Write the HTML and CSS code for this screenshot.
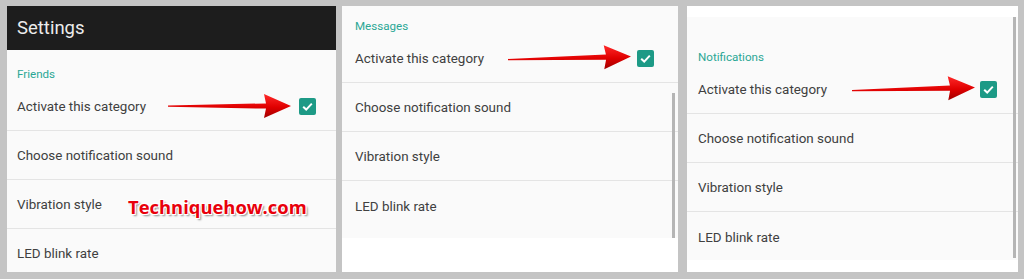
FILE: index.html
```html
<!DOCTYPE html>
<html>
<head>
<meta charset="utf-8">
<link rel="stylesheet" href="styles.css">
</head>
<body>
<div class="shots">
  <section class="panel panel-a">
    <header class="appbar">Settings</header>
    <div class="list list-a">
      <div class="cat cat-a">Friends</div>
      <div class="row"><span>Activate this category</span><span class="check"><svg viewBox="0 0 17 17" width="17" height="17"><path d="M4.2 8.8 L7.2 11.6 L12.8 5.6" fill="none" stroke="#fff" stroke-width="2"/></svg></span></div>
      <div class="row"><span>Choose notification sound</span></div>
      <div class="row"><span>Vibration style</span></div>
      <div class="row"><span>LED blink rate</span></div>
    </div>
    <svg class="arrow arrow-a" viewBox="0 0 124 26" width="124" height="26"><defs><linearGradient id="ga" x1="0" y1="0" x2="0" y2="1"><stop offset="0" stop-color="#ff2a2a"/><stop offset="0.55" stop-color="#e00000"/><stop offset="1" stop-color="#a00000"/></linearGradient></defs><path d="M0 12.4 L98 10.4 L96 1 L123 13 L96 25 L98 15.6 L0 13.8 Z" fill="url(#ga)"/></svg>
    <div class="mark">Techniquehow.com</div>
  </section>

  <section class="panel panel-b">
    <div class="list list-b">
      <div class="cat cat-b">Messages</div>
      <div class="row row-b"><span>Activate this category</span><span class="check"><svg viewBox="0 0 17 17" width="17" height="17"><path d="M4.2 8.8 L7.2 11.6 L12.8 5.6" fill="none" stroke="#fff" stroke-width="2"/></svg></span></div>
      <div class="row"><span>Choose notification sound</span></div>
      <div class="row"><span>Vibration style</span></div>
      <div class="row last"><span>LED blink rate</span></div>
      <div class="scroll scroll-b"></div>
    </div>
    <svg class="arrow arrow-b" viewBox="0 0 124 26" width="124" height="26"><path d="M0 12.4 L98 10.4 L96 1 L123 13 L96 25 L98 15.6 L0 13.8 Z" fill="url(#ga)"/></svg>
  </section>

  <section class="panel panel-c">
    <div class="strip"></div>
    <div class="list list-c">
      <div class="cat cat-c">Notifications</div>
      <div class="row"><span>Activate this category</span><span class="check"><svg viewBox="0 0 17 17" width="17" height="17"><path d="M4.2 8.8 L7.2 11.6 L12.8 5.6" fill="none" stroke="#fff" stroke-width="2"/></svg></span></div>
      <div class="row"><span>Choose notification sound</span></div>
      <div class="row"><span>Vibration style</span></div>
      <div class="row last"><span>LED blink rate</span></div>
      <div class="scroll scroll-c"></div>
    </div>
    <svg class="arrow arrow-c" viewBox="0 0 124 26" width="124" height="26"><path d="M0 12.4 L98 10.4 L96 1 L123 13 L96 25 L98 15.6 L0 13.8 Z" fill="url(#ga)"/></svg>
  </section>
</div>
</body>
</html>
```

FILE: styles.css
```css
html, body {
  margin: 0;
  padding: 0;
}
body {
  width: 1024px;
  height: 279px;
  overflow: hidden;
  background: #c4c4c4;
  font-family: Roboto, "Liberation Sans", sans-serif;
}
.shots {
  display: flex;
  gap: 6px;
  padding: 6px 0 0 7px;
}
.panel {
  position: relative;
  height: 266px;
  background: #ffffff;
  display: flex;
  flex-direction: column;
  overflow: hidden;
}
.panel-a { width: 329px; background: #fafafa; }
.panel-b { width: 336px; }
.panel-c { width: 331px; margin-left: 3px; }

.appbar {
  height: 44px;
  flex: 0 0 44px;
  background: #1d1d1d;
  color: #ececec;
  font-size: 18.5px;
  line-height: 44px;
  padding-left: 10px;
}
.list {
  position: relative;
  background: #fafafa;
  display: flex;
  flex-direction: column;
}
.list-b { height: 232px; }
.strip { height: 11px; flex: 0 0 11px; background: #fff; }
.list-c { height: 243px; }

.cat {
  color: #2aa795;
  font-size: 11.6px;
  line-height: 16px;
  padding-left: 10px;
}
.cat-a { padding-top: 16px; height: 16px; }
.cat-b { padding-top: 12px; height: 16px; padding-left: 13px; }
.cat-c { padding-top: 32px; height: 16px; padding-left: 11px; }

.row {
  height: 48px;
  flex: 0 0 48px;
  border-bottom: 1px solid #e4e4e4;
  display: flex;
  align-items: center;
  justify-content: space-between;
  padding: 1px 20px 0 10px;
  box-sizing: border-box;
  height: 49px;
  flex-basis: 49px;
  color: #404040;
  font-size: 13.4px;
}
.list-b .row { padding-left: 13px; padding-right: 24px; }
.list-c .row { padding-left: 11px; padding-right: 21px; }
.row.last { border-bottom: none; }

.check {
  width: 17px;
  height: 17px;
  border-radius: 2px;
  background: #1d9a86;
  display: block;
  margin-top: -1px;
}
.check svg { display: block; }

.scroll {
  position: absolute;
  width: 3px;
  background: #b5b5b5;
}
.scroll-b { right: 3px; top: 87px; bottom: 0; }
.scroll-c { right: 2px; top: 0; bottom: 2px; }

.arrow {
  position: absolute;
}
.arrow-a { left: 161px; top: 87px; }
.arrow-b { left: 166px; top: 39px; transform: rotate(-1.4deg); }
.arrow-c { left: 165px; top: 70px; transform: rotate(-1.4deg); }

.mark {
  position: absolute;
  left: 121px;
  top: 188px;
  font-family: "Open Sans", "DejaVu Sans", sans-serif;
  font-weight: 700;
  font-size: 18.4px;
  color: #e8000b;
  text-shadow: -1px -1px 0 #fff, 1px -1px 0 #fff, -1px 1px 0 #fff, 1px 1px 0 #fff, 2px 2px 2px rgba(0,0,0,0.45);
}
```
